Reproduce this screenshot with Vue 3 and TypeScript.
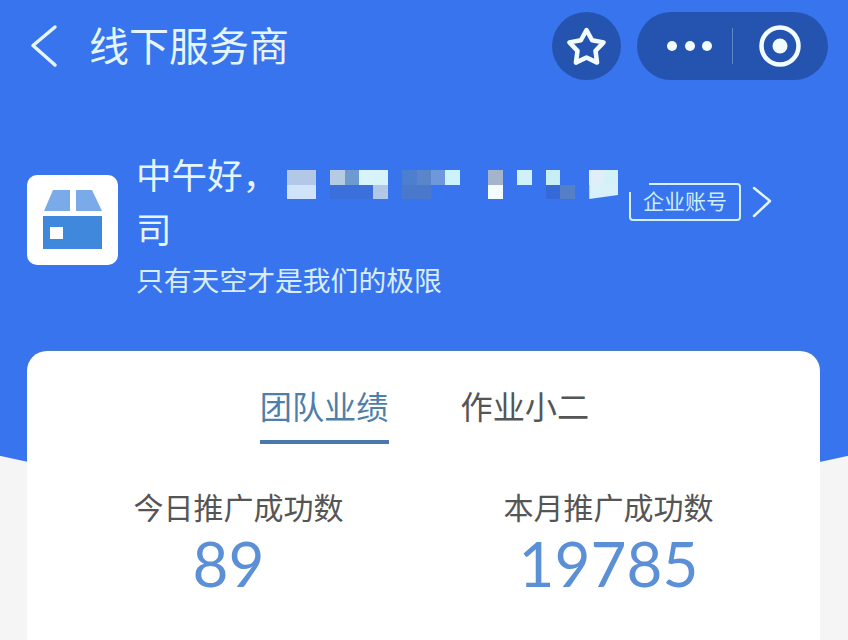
<script setup lang="ts">
interface Cell {
  col: number
  row: number
  span: number
  color: string
  cut?: boolean
}

const cells: Cell[] = [
  { col: 1, row: 1, span: 2, color: '#b3c8e6' },
  { col: 1, row: 2, span: 2, color: '#cfe4f8' },
  { col: 4, row: 1, span: 1, color: '#b5cbe4' },
  { col: 5, row: 1, span: 1, color: '#6d9bd0' },
  { col: 6, row: 1, span: 2, color: '#d8f4fb' },
  { col: 4, row: 2, span: 3, color: '#3a6fdc' },
  { col: 7, row: 2, span: 1, color: '#b0c8e6' },
  { col: 9, row: 1, span: 1, color: '#4c7fcf' },
  { col: 10, row: 1, span: 1, color: '#5b85c9' },
  { col: 9, row: 2, span: 2, color: '#4a78cc' },
  { col: 11, row: 1, span: 1, color: '#6e97dc' },
  { col: 12, row: 1, span: 1, color: '#ccf2fb' },
  { col: 15, row: 1, span: 1, color: '#a4b4cc' },
  { col: 15, row: 2, span: 1, color: '#f4fbfd' },
  { col: 17, row: 1, span: 1, color: '#d0f0fa' },
  { col: 19, row: 1, span: 1, color: '#c8eef5' },
  { col: 19, row: 2, span: 1, color: '#3569d8' },
  { col: 20, row: 2, span: 1, color: '#5580c8' },
  { col: 22, row: 1, span: 1, color: '#e0eefa' },
  { col: 23, row: 1, span: 1, color: '#d2f2fa' },
  { col: 22, row: 2, span: 2, color: '#d8f0fa', cut: true },
]

function cellStyle(c: Cell) {
  return {
    gridColumn: `${c.col} / span ${c.span}`,
    gridRow: `${c.row}`,
    background: c.color,
  }
}

const stats = [
  { label: '今日推广成功数', value: '89', shifted: true },
  { label: '本月推广成功数', value: '19785', shifted: false },
]
</script>

<template>
  <div class="page">
    <header class="nav">
      <svg class="back" width="32" height="44" viewBox="0 0 32 44" aria-hidden="true">
        <polyline points="28,3 6,21.5 28,41" />
      </svg>
      <h1 class="title">线下服务商</h1>
      <div class="fav">
        <svg width="69" height="68" viewBox="0 0 69 68" aria-hidden="true">
          <polygon points="34.5,18 40.1,28.3 51.6,30.4 43.5,38.9 45.1,50.6 34.5,45.5 23.9,50.6 25.5,38.9 17.4,30.4 28.9,28.3" />
        </svg>
      </div>
      <div class="capsule">
        <div class="dots"><i></i><i></i><i></i></div>
        <div class="divider"></div>
        <svg class="target" width="44" height="44" viewBox="0 0 44 44" aria-hidden="true">
          <circle class="ring" cx="22" cy="22" r="18.5" />
          <circle class="core" cx="22" cy="22" r="7.5" />
        </svg>
      </div>
    </header>

    <section class="profile">
      <div class="logo">
        <svg width="91" height="90" viewBox="0 0 91 90" aria-hidden="true">
          <polygon class="flap" points="26,15 43,15 43,36 17,36" />
          <polygon class="flap" points="49,15 65,15 75,36 49,36" />
          <rect class="box" x="16" y="41" width="59" height="33" />
          <rect class="label" x="23" y="52" width="13" height="12" />
        </svg>
      </div>
      <div class="intro">
        <div class="line">
          <span>中午好，</span>
          <div class="mosaic">
            <span
              v-for="(c, i) in cells"
              :key="i"
              :class="{ cut: c.cut }"
              :style="cellStyle(c)"
            ></span>
          </div>
        </div>
        <div class="line">司</div>
        <p class="motto">只有天空才是我们的极限</p>
      </div>
      <div class="account">
        <span class="badge">企业账号</span>
        <svg class="more" width="20" height="32" viewBox="0 0 20 32" aria-hidden="true">
          <polyline points="2,2 18,15 2,30" />
        </svg>
      </div>
    </section>

    <main class="card">
      <nav class="tabs">
        <span class="tab active">团队业绩</span>
        <span class="tab">作业小二</span>
      </nav>
      <div class="stats">
        <div v-for="s in stats" :key="s.label" class="stat">
          <div class="stat-label">{{ s.label }}</div>
          <div class="stat-value" :class="{ shifted: s.shifted }">{{ s.value }}</div>
        </div>
      </div>
    </main>
  </div>
</template>

<style>
html,
body {
  margin: 0;
  background: #f5f5f5;
}
</style>

<style scoped>
.page {
  width: 848px;
  height: 640px;
  overflow: hidden;
  font-family: "Noto Sans CJK SC", "Noto Sans", sans-serif;
  color: #e4f5fb;
  background: radial-gradient(circle 1950px at 50% -1447px, #3874ee 99.95%, #f5f5f5 100%);
}

.nav {
  display: flex;
  align-items: center;
  height: 68px;
  padding: 12px 20px 12px 27px;
}

.back polyline,
.more polyline {
  fill: none;
  stroke: #e4f5fb;
  stroke-linecap: round;
  stroke-linejoin: round;
}

.back polyline {
  stroke-width: 3.5;
}

.more polyline {
  stroke-width: 2.5;
}

.title {
  margin: 0 auto 4px 30px;
  font-size: 40px;
  font-weight: 400;
  line-height: 64px;
}

.fav {
  width: 69px;
  height: 68px;
  border-radius: 50%;
  background: #2553b0;
}

.fav svg {
  display: block;
}

.fav polygon {
  fill: none;
  stroke: #f2fbfd;
  stroke-width: 4.5;
  stroke-linejoin: round;
}

.capsule {
  display: flex;
  align-items: center;
  width: 191px;
  height: 68px;
  margin-left: 16px;
  padding-left: 30px;
  box-sizing: border-box;
  border-radius: 34px;
  background: #2553b0;
}

.dots {
  display: flex;
  gap: 7.5px;
}

.dots i {
  display: block;
  width: 10px;
  height: 10px;
  border-radius: 50%;
  background: #f2fbfd;
}

.divider {
  width: 1px;
  height: 36px;
  margin-left: 20px;
  background: #5f86c8;
}

.target {
  margin-left: 25px;
}

.ring {
  fill: none;
  stroke: #f2fbfd;
  stroke-width: 4.5;
}

.core {
  fill: #f2fbfd;
}

.profile {
  display: flex;
  align-items: flex-start;
  margin-top: 55px;
  padding-left: 27px;
}

.logo {
  width: 91px;
  height: 90px;
  margin-top: 28px;
  border-radius: 10px;
  background: #fff;
}

.logo svg {
  display: block;
}

.flap {
  fill: #7aaae8;
}

.box {
  fill: #3f88dc;
}

.label {
  fill: #fff;
}

.intro {
  width: 493px;
  margin-left: 18px;
}

.line {
  display: flex;
  height: 54px;
  font-size: 35.5px;
  line-height: 54px;
}

.mosaic {
  display: grid;
  grid-template-columns: repeat(23, 14.4px);
  grid-template-rows: 14.5px 14.5px;
  align-self: flex-end;
  margin: 0 0 2px 9px;
}

.cut {
  clip-path: polygon(0 0, 100% 0, 100% 72%, 0 100%);
}

.motto {
  margin: 4px 0 0;
  font-size: 27.8px;
  line-height: 40px;
  color: #d8edfa;
}

.account {
  display: flex;
  align-items: center;
  margin-top: 36px;
}

.badge {
  position: relative;
  box-sizing: border-box;
  width: 112px;
  height: 38px;
  border: 2px solid #d4f0fb;
  border-radius: 4px;
  font-size: 21px;
  line-height: 30px;
  text-align: center;
  color: #cfeefb;
}

.badge::before {
  content: "";
  position: absolute;
  top: -3px;
  left: -3px;
  width: 21px;
  height: 10px;
  background: #3874ee;
}

.more {
  margin-left: 11px;
}

.card {
  height: 289px;
  margin: 52px 28px 0 27px;
  border-radius: 20px 20px 0 0;
  background: #fff;
  box-shadow: 0 -1px 0 #4a79c6;
}

.tabs {
  display: flex;
  justify-content: center;
  gap: 72px;
  padding: 34px 0 0 2px;
}

.tab {
  padding-bottom: 19px;
  font-size: 32.2px;
  line-height: 40px;
  color: #555;
}

.tab.active {
  padding-bottom: 15px;
  border-bottom: 4px solid #4a78ac;
  color: #4e7fa8;
}

.stats {
  display: flex;
  justify-content: center;
  margin-top: 42px;
}

.stat {
  width: 370px;
  text-align: center;
}

.stat-label {
  font-size: 30px;
  line-height: 40px;
  color: #555;
}

.stat-value {
  margin-top: 1px;
  font-family: Lato, "Noto Sans", sans-serif;
  font-size: 62px;
  line-height: 72px;
  color: #5b8fd6;
}

.stat-value.shifted {
  margin-right: 20px;
}
</style>
